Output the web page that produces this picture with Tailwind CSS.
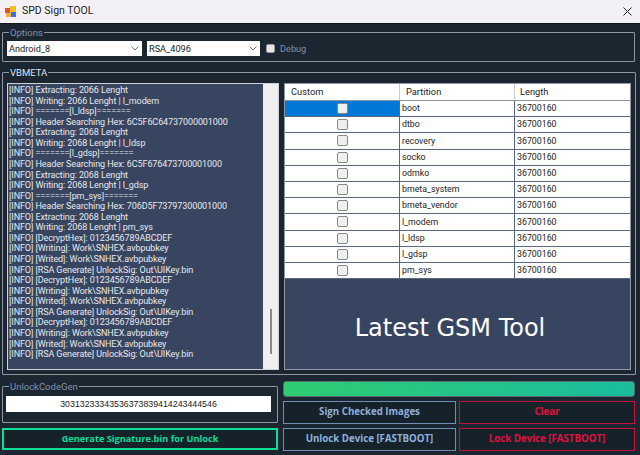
<!DOCTYPE html>
<html><head><meta charset="utf-8"><script src="https://cdn.jsdelivr.net/npm/@tailwindcss/browser@4"></script></head>
<body class="w-[640px] h-[455px] overflow-hidden bg-[#1b2631] font-['Roboto','Liberation_Sans',sans-serif]">
<div class="h-[24px] bg-[#f3f1f6] flex items-center pl-[5px] pr-[8px] text-[#222] border-b border-[#0f1720]">
  <svg width="12" height="12" viewBox="0 0 12 12" class="mr-[5px]"><rect x="0" y="2" width="5" height="5" fill="#e2542c"/><rect x="5" y="0" width="6" height="6" fill="#f0c020"/><rect x="1" y="7" width="5" height="4" fill="#f0b040"/><rect x="6" y="6" width="5" height="5" fill="#3f6fd8"/></svg>
  <span class="text-[10.5px] leading-none">SPD Sign TOOL</span>
  <svg width="9" height="9" viewBox="0 0 9 9" class="ml-auto"><path d="M.5.5l8 8M8.5.5l-8 8" stroke="#222" fill="none"/></svg>
</div>
<div class="pl-[2px] pr-[5px] flex flex-col text-[9.5px] leading-none">
  <fieldset class="h-[35px] mt-[3px] border border-[#8f98a2] rounded-[1px] px-[4px] flex items-start">
    <legend class="text-[#7f93ad] ml-[2px] px-[1px] text-[9.5px] leading-[11px]">Options</legend>
    <div class="flex items-center gap-[5px] text-[9.2px] mt-[3px]">
      <div class="w-[135px] h-[15px] bg-white text-[#222] flex items-center pl-[2px] pr-[3px] justify-between"><span>Android_8</span><svg width="8" height="5" viewBox="0 0 8 5"><path d="M.5.5L4 4 7.5.5" stroke="#777" fill="none"/></svg></div>
      <div class="w-[113px] h-[15px] bg-white text-[#222] flex items-center pl-[2px] pr-[3px] justify-between"><span>RSA_4096</span><svg width="8" height="5" viewBox="0 0 8 5"><path d="M.5.5L4 4 7.5.5" stroke="#777" fill="none"/></svg></div>
      <div class="w-[9px] h-[9px] bg-[#e6e6e6] border border-[#999] rounded-[2px] ml-[1px]"></div>
      <span class="text-[#7f93ad]">Debug</span>
    </div>
  </fieldset>
  <fieldset class="h-[308px] mt-[5px] border border-[#8f98a2] rounded-[1px] px-[4px] flex gap-[5px]">
    <legend class="text-[#dfe6ee] ml-[2px] px-[1px] text-[9.5px] leading-[11px]">VBMETA</legend>
    <div class="w-[272px] h-[287px] mt-[5px] bg-[#f0f0f0] border border-[#cfd3d8] flex">
      <div class="w-[255px] bg-[#384560] text-[#e6e9ee] text-[9px] tracking-[-0.09px] leading-[10.56px] pt-[1px] pl-[1px] whitespace-nowrap overflow-hidden">
        <div>[INFO] Extracting: 2066 Lenght</div>
        <div>[INFO] Writing: 2066 Lenght | l_modem</div>
        <div>[INFO] =======[l_ldsp]=======</div>
        <div>[INFO] Header Searching Hex: 6C5F6C64737000001000</div>
        <div>[INFO] Extracting: 2068 Lenght</div>
        <div>[INFO] Writing: 2068 Lenght | l_ldsp</div>
        <div>[INFO] =======[l_gdsp]=======</div>
        <div>[INFO] Header Searching Hex: 6C5F676473700001000</div>
        <div>[INFO] Extracting: 2068 Lenght</div>
        <div>[INFO] Writing: 2068 Lenght | l_gdsp</div>
        <div>[INFO] =======[pm_sys]=======</div>
        <div>[INFO] Header Searching Hex: 706D5F73797300001000</div>
        <div>[INFO] Extracting: 2068 Lenght</div>
        <div>[INFO] Writing: 2068 Lenght | pm_sys</div>
        <div>[INFO] [DecryptHex]: 0123456789ABCDEF</div>
        <div>[INFO] [Writing]: Work\SNHEX.avbpubkey</div>
        <div>[INFO] [Writed]: Work\SNHEX.avbpubkey</div>
        <div>[INFO] [RSA Generate] UnlockSig: Out\UIKey.bin</div>
        <div>[INFO] [DecryptHex]: 0123456789ABCDEF</div>
        <div>[INFO] [Writing]: Work\SNHEX.avbpubkey</div>
        <div>[INFO] [Writed]: Work\SNHEX.avbpubkey</div>
        <div>[INFO] [RSA Generate] UnlockSig: Out\UIKey.bin</div>
        <div>[INFO] [DecryptHex]: 0123456789ABCDEF</div>
        <div>[INFO] [Writing]: Work\SNHEX.avbpubkey</div>
        <div>[INFO] [Writed]: Work\SNHEX.avbpubkey</div>
        <div>[INFO] [RSA Generate] UnlockSig: Out\UIKey.bin</div>
      </div>
      <div class="flex-1 flex justify-center items-end pb-[15px]"><div class="w-[2px] h-[45px] bg-[#8a8a8a]"></div></div>
    </div>
    <div class="w-[347px] h-[287px] mt-[5px] bg-[#384560] border border-[#8f98a2] flex flex-col text-[#222] text-[8.8px]">
      <div class="h-[17px] bg-white grid grid-cols-[114px_115px_1fr] items-center border-b border-[#8f98a2] text-[9.3px]">
        <span class="pl-[6px]">Custom</span><span class="pl-[6px] border-l border-[#ccc] h-full flex items-center">Partition</span><span class="pl-[5px] border-l border-[#ccc] h-full flex items-center">Length</span>
      </div>
      <div class="grid grid-cols-[114px_115px_1fr] auto-rows-[16.2px] bg-white">
        <div class="bg-[#0078d7] border-b-[1.5px] border-[#59677f] flex items-center justify-center"><i class="block w-[11px] h-[11px] bg-[#efefef] border border-[#888] rounded-[2px]"></i></div><div class="border-l border-b-[1.5px] border-[#59677f] pl-[2px] flex items-center">boot</div><div class="border-l border-b-[1.5px] border-[#59677f] pl-[2px] flex items-center">36700160</div>
        <div class="border-b-[1.5px] border-[#59677f] flex items-center justify-center"><i class="block w-[11px] h-[11px] bg-[#efefef] border border-[#888] rounded-[2px]"></i></div><div class="border-l border-b-[1.5px] border-[#59677f] pl-[2px] flex items-center">dtbo</div><div class="border-l border-b-[1.5px] border-[#59677f] pl-[2px] flex items-center">36700160</div>
        <div class="border-b-[1.5px] border-[#59677f] flex items-center justify-center"><i class="block w-[11px] h-[11px] bg-[#efefef] border border-[#888] rounded-[2px]"></i></div><div class="border-l border-b-[1.5px] border-[#59677f] pl-[2px] flex items-center">recovery</div><div class="border-l border-b-[1.5px] border-[#59677f] pl-[2px] flex items-center">36700160</div>
        <div class="border-b-[1.5px] border-[#59677f] flex items-center justify-center"><i class="block w-[11px] h-[11px] bg-[#efefef] border border-[#888] rounded-[2px]"></i></div><div class="border-l border-b-[1.5px] border-[#59677f] pl-[2px] flex items-center">socko</div><div class="border-l border-b-[1.5px] border-[#59677f] pl-[2px] flex items-center">36700160</div>
        <div class="border-b-[1.5px] border-[#59677f] flex items-center justify-center"><i class="block w-[11px] h-[11px] bg-[#efefef] border border-[#888] rounded-[2px]"></i></div><div class="border-l border-b-[1.5px] border-[#59677f] pl-[2px] flex items-center">odmko</div><div class="border-l border-b-[1.5px] border-[#59677f] pl-[2px] flex items-center">36700160</div>
        <div class="border-b-[1.5px] border-[#59677f] flex items-center justify-center"><i class="block w-[11px] h-[11px] bg-[#efefef] border border-[#888] rounded-[2px]"></i></div><div class="border-l border-b-[1.5px] border-[#59677f] pl-[2px] flex items-center">bmeta_system</div><div class="border-l border-b-[1.5px] border-[#59677f] pl-[2px] flex items-center">36700160</div>
        <div class="border-b-[1.5px] border-[#59677f] flex items-center justify-center"><i class="block w-[11px] h-[11px] bg-[#efefef] border border-[#888] rounded-[2px]"></i></div><div class="border-l border-b-[1.5px] border-[#59677f] pl-[2px] flex items-center">bmeta_vendor</div><div class="border-l border-b-[1.5px] border-[#59677f] pl-[2px] flex items-center">36700160</div>
        <div class="border-b-[1.5px] border-[#59677f] flex items-center justify-center"><i class="block w-[11px] h-[11px] bg-[#efefef] border border-[#888] rounded-[2px]"></i></div><div class="border-l border-b-[1.5px] border-[#59677f] pl-[2px] flex items-center">l_modem</div><div class="border-l border-b-[1.5px] border-[#59677f] pl-[2px] flex items-center">36700160</div>
        <div class="border-b-[1.5px] border-[#59677f] flex items-center justify-center"><i class="block w-[11px] h-[11px] bg-[#efefef] border border-[#888] rounded-[2px]"></i></div><div class="border-l border-b-[1.5px] border-[#59677f] pl-[2px] flex items-center">l_ldsp</div><div class="border-l border-b-[1.5px] border-[#59677f] pl-[2px] flex items-center">36700160</div>
        <div class="border-b-[1.5px] border-[#59677f] flex items-center justify-center"><i class="block w-[11px] h-[11px] bg-[#efefef] border border-[#888] rounded-[2px]"></i></div><div class="border-l border-b-[1.5px] border-[#59677f] pl-[2px] flex items-center">l_gdsp</div><div class="border-l border-b-[1.5px] border-[#59677f] pl-[2px] flex items-center">36700160</div>
        <div class="border-b-[1.5px] border-[#59677f] flex items-center justify-center"><i class="block w-[11px] h-[11px] bg-[#efefef] border border-[#888] rounded-[2px]"></i></div><div class="border-l border-b-[1.5px] border-[#59677f] pl-[2px] flex items-center">pm_sys</div><div class="border-l border-b-[1.5px] border-[#59677f] pl-[2px] flex items-center">36700160</div>
      </div>
      <div class="flex-1 flex items-center justify-center text-white text-[24px] font-['DejaVu_Sans',sans-serif] pr-[15px] pt-[7px]">Latest GSM Tool</div>
    </div>
  </fieldset>
  <div class="mt-[6px] grid grid-cols-[276px_1fr] gap-x-[5px]">
    <div class="flex flex-col">
      <fieldset class="h-[42px] border border-[#8f98a2] rounded-[1px] px-[3px]">
        <legend class="text-[#7f93ad] ml-[3px] px-[1px] text-[9.5px] leading-[11px]">UnlockCodeGen</legend>
        <div class="h-[16px] mt-[4px] w-[265px] bg-white text-[#222] flex items-center justify-center text-[8.8px] font-['Liberation_Sans',sans-serif]">30313233343536373839414243444546</div>
      </fieldset>
      <button class="mt-[5px] h-[22px] border-2 border-[#0fdc96] bg-[#16222a] text-[#0fdc96] font-bold text-[9.2px] font-['Open_Sans',sans-serif]">Generate Signature.bin for Unlock</button>
    </div>
    <div class="flex flex-col">
      <div class="h-[16px] rounded-[3px] bg-gradient-to-r from-[#2ecc71] to-[#1abc9c] border border-[#5a6a70]"></div>
      <div class="mt-[4px] grid grid-cols-[173px_176px] gap-x-[3px] gap-y-[4px] font-['Open_Sans',sans-serif]">
        <button class="h-[23px] border border-[#6f8db5] bg-[#16222a] text-[#8fb0dc] font-bold text-[9.7px] pb-[1px]">Sign Checked Images</button>
        <button class="h-[23px] border border-[#c4103a] bg-[#16222a] text-[#e0103f] font-bold text-[9.7px] pb-[1px]">Clear</button>
        <button class="h-[23px] border border-[#6f8db5] bg-[#16222a] text-[#8fb0dc] font-bold text-[9.7px] pb-[1px]">Unlock Device [FASTBOOT]</button>
        <button class="h-[23px] border border-[#c4103a] bg-[#16222a] text-[#e0103f] font-bold text-[9.7px] pb-[1px]">Lock Device [FASTBOOT]</button>
      </div>
    </div>
  </div>
</div>
</body></html>
